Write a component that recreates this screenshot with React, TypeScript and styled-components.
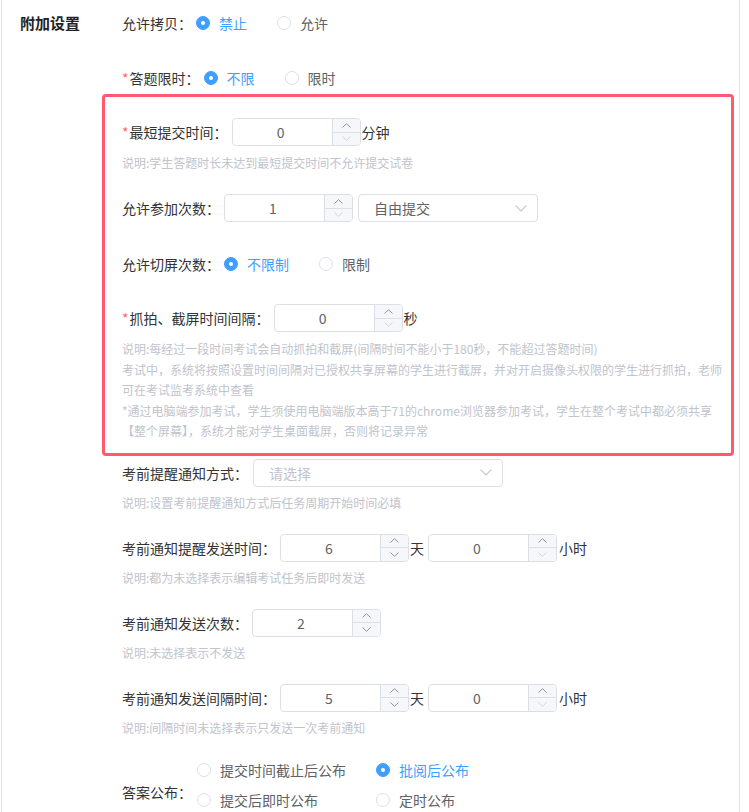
import React from "react";
import styled, { createGlobalStyle } from "styled-components";

const GlobalStyle = createGlobalStyle`
  html, body { margin: 0; padding: 0; background: #fff; }
  body {
    font-family: "Noto Sans CJK SC", "Noto Sans", sans-serif;
    color: #333;
    -webkit-font-smoothing: antialiased;
  }
  * { box-sizing: border-box; }
`;

const Card = styled.div`
  margin-left: 1px;
  width: 739px;
  min-height: 830px;
  border-left: 1px solid #e4e4e4;
  border-right: 1px solid #e4e4e4;
  padding: 9px 0 20px 18px;
  display: flex;
  align-items: flex-start;
`;

const SectionTitle = styled.div`
  width: 102px;
  flex: none;
  font-size: 15px;
  line-height: 28px;
  font-weight: 700;
  color: #222;
`;

const Content = styled.div`
  width: 612px;
  flex: none;
  display: flex;
  flex-direction: column;
`;

const Item = styled.div<{ $mb?: number; $mt?: number }>`
  margin-top: ${(p) => p.$mt ?? 0}px;
  margin-bottom: ${(p) => p.$mb ?? 21}px;
`;

const Row = styled.div`
  display: flex;
  align-items: center;
  height: 28px;
  font-size: 14px;
  line-height: 28px;
`;

const LabelText = styled.span`
  color: #333;
  white-space: nowrap;
  margin-right: 4px;
`;

const Star = styled.span`
  color: #f56c6c;
  margin-right: 1px;
`;

const Unit = styled.span<{ $ml?: number; $mr?: number }>`
  color: #333;
  margin-left: ${(p) => p.$ml ?? 1}px;
  margin-right: ${(p) => p.$mr ?? 0}px;
  white-space: nowrap;
`;

const Desc = styled.div<{ $mt?: number; $lh?: number }>`
  margin-top: ${(p) => p.$mt ?? 6}px;
  font-size: 12px;
  line-height: ${(p) => p.$lh ?? 20}px;
  color: #c0c4cc;
`;

const DescLine = styled.span`
  display: block;
  white-space: nowrap;
`;

const Highlight = styled.div`
  margin-left: -20px;
  width: 632px;
  border: 3px solid #ff5a6e;
  border-radius: 4px;
  padding: 21px 0 11px 17px;
`;

/* ---------- number input ---------- */
const NumberBox = styled.div`
  display: flex;
  width: 129px;
  height: 28px;
  flex: none;
  border: 1px solid #dcdfe6;
  border-radius: 4px;
  overflow: hidden;
  background: #fff;
`;

const NumberValue = styled.div`
  flex: 1;
  display: flex;
  align-items: center;
  justify-content: center;
  font-size: 14px;
  color: #606266;
  padding-right: 3px;
`;

const Steppers = styled.div`
  width: 28px;
  display: flex;
  flex-direction: column;
  border-left: 1px solid #dcdfe6;
  background: #f5f7fa;
`;

const Step = styled.div<{ $disabled?: boolean; $top?: boolean }>`
  flex: 1;
  display: flex;
  align-items: center;
  justify-content: center;
  color: ${(p) => (p.$disabled ? "#d3d6dc" : "#8d9199")};
  border-bottom: ${(p) => (p.$top ? "1px solid #dcdfe6" : "none")};
`;

const Caret = ({ up }: { up?: boolean }) => (
  <svg width="9" height="5" viewBox="0 0 9 5" fill="none">
    <polyline
      points={up ? "0.5,4.5 4.5,0.7 8.5,4.5" : "0.5,0.5 4.5,4.3 8.5,0.5"}
      stroke="currentColor"
      strokeWidth="1"
    />
  </svg>
);

const NumberInput = ({ value, min = 0 }: { value: number; min?: number }) => (
  <NumberBox>
    <NumberValue>{value}</NumberValue>
    <Steppers>
      <Step $top>
        <Caret up />
      </Step>
      <Step $disabled={value <= min}>
        <Caret />
      </Step>
    </Steppers>
  </NumberBox>
);

/* ---------- select ---------- */
const SelectBox = styled.div<{ $w: number; $ml?: number }>`
  display: flex;
  align-items: center;
  justify-content: space-between;
  width: ${(p) => p.$w}px;
  height: 28px;
  margin-left: ${(p) => p.$ml ?? 0}px;
  flex: none;
  border: 1px solid #dcdfe6;
  border-radius: 4px;
  padding: 0 10px 0 15px;
  background: #fff;
`;

const SelectText = styled.span<{ $placeholder?: boolean }>`
  font-size: 14px;
  color: ${(p) => (p.$placeholder ? "#c0c4cc" : "#606266")};
`;

const Chevron = () => (
  <svg width="12" height="7" viewBox="0 0 12 7" fill="none">
    <polyline points="0.7,0.7 6,6 11.3,0.7" stroke="#c0c4cc" strokeWidth="1.1" />
  </svg>
);

const Select = ({ w, ml, text, placeholder }: { w: number; ml?: number; text: string; placeholder?: boolean }) => (
  <SelectBox $w={w} $ml={ml}>
    <SelectText $placeholder={placeholder}>{text}</SelectText>
    <Chevron />
  </SelectBox>
);

/* ---------- radio ---------- */
const RadioGroup = styled.div`
  display: flex;
  align-items: center;
`;

const RadioGrid = styled.div`
  display: grid;
  grid-template-columns: 179px auto;
  row-gap: 8px;
`;

const RadioOption = styled.label<{ $checked: boolean; $mr?: number }>`
  display: inline-flex;
  align-items: center;
  height: 22px;
  margin-right: ${(p) => p.$mr ?? 30}px;
  font-size: 14px;
  color: ${(p) => (p.$checked ? "#409eff" : "#606266")};
  white-space: nowrap;
`;

const RadioCircle = styled.span<{ $checked: boolean }>`
  position: relative;
  width: 14px;
  height: 14px;
  flex: none;
  margin-right: 9px;
  border-radius: 50%;
  border: 1px solid ${(p) => (p.$checked ? "#409eff" : "#dcdfe6")};
  background: ${(p) => (p.$checked ? "#409eff" : "#fff")};
  &::after {
    content: "";
    position: absolute;
    left: 50%;
    top: 50%;
    width: 4px;
    height: 4px;
    border-radius: 50%;
    background: #fff;
    transform: translate(-50%, -50%);
    display: ${(p) => (p.$checked ? "block" : "none")};
  }
`;

const Radio = ({ checked, label, mr }: { checked: boolean; label: string; mr?: number }) => (
  <RadioOption $checked={checked} $mr={mr}>
    <RadioCircle $checked={checked} />
    {label}
  </RadioOption>
);

const AnswerRow = styled.div`
  display: flex;
  align-items: flex-start;
  font-size: 14px;
`;

const AnswerLabel = styled.span`
  color: #333;
  line-height: 28px;
  margin-top: 19px;
  margin-right: 5px;
  white-space: nowrap;
`;

const Label = ({ text, required }: { text: string; required?: boolean }) => (
  <LabelText>
    {required && <Star>*</Star>}
    {text}
  </LabelText>
);

export default function App() {
  return (
    <>
      <GlobalStyle />
      <Card>
        <SectionTitle>附加设置</SectionTitle>
        <Content>
          <Item $mb={27}>
            <Row>
              <Label text="允许拷贝：" />
              <RadioGroup>
                <Radio checked label="禁止" />
                <Radio checked={false} label="允许" />
              </RadioGroup>
            </Row>
          </Item>
          <Item $mb={2}>
            <Row>
              <Label required text="答题限时：" />
              <RadioGroup>
                <Radio checked label="不限" />
                <Radio checked={false} label="限时" />
              </RadioGroup>
            </Row>
          </Item>

          <Highlight>
            <Item $mb={21}>
              <Row>
                <Label required text="最短提交时间：" />
                <NumberInput value={0} />
                <Unit>分钟</Unit>
              </Row>
              <Desc $mt={7}>说明:学生答题时长未达到最短提交时间不允许提交试卷</Desc>
            </Item>
            <Item $mb={28}>
              <Row>
                <Label text="允许参加次数：" />
                <NumberInput value={1} min={1} />
                <Select w={180} ml={5} text="自由提交" />
              </Row>
            </Item>
            <Item $mb={26}>
              <Row>
                <Label text="允许切屏次数：" />
                <RadioGroup>
                  <Radio checked label="不限制" />
                  <Radio checked={false} label="限制" />
                </RadioGroup>
              </Row>
            </Item>
            <Item $mb={0}>
              <Row>
                <Label required text="抓拍、截屏时间间隔：" />
                <NumberInput value={0} />
                <Unit>秒</Unit>
              </Row>
              <Desc $mt={7} $lh={20.5}>
                <DescLine>说明:每经过一段时间考试会自动抓拍和截屏(间隔时间不能小于180秒，不能超过答题时间)</DescLine>
                <DescLine>考试中，系统将按照设置时间间隔对已授权共享屏幕的学生进行截屏，并对开启摄像头权限的学生进行抓拍，老师</DescLine>
                <DescLine>可在考试监考系统中查看</DescLine>
                <DescLine>*通过电脑端参加考试，学生须使用电脑端版本高于71的chrome浏览器参加考试，学生在整个考试中都必须共享</DescLine>
                <DescLine>【整个屏幕】，系统才能对学生桌面截屏，否则将记录异常</DescLine>
              </Desc>
            </Item>
          </Highlight>

          <Item $mt={3}>
            <Row>
              <Label text="考前提醒通知方式：" />
              <Select w={250} ml={1} text="请选择" placeholder />
            </Row>
            <Desc>说明:设置考前提醒通知方式后任务周期开始时间必填</Desc>
          </Item>
          <Item>
            <Row>
              <Label text="考前通知提醒发送时间：" />
              <NumberInput value={6} min={-1} />
              <Unit $mr={4}>天</Unit>
              <NumberInput value={0} />
              <Unit $ml={2}>小时</Unit>
            </Row>
            <Desc>说明:都为未选择表示编辑考试任务后即时发送</Desc>
          </Item>
          <Item>
            <Row>
              <Label text="考前通知发送次数：" />
              <NumberInput value={2} min={-1} />
            </Row>
            <Desc>说明:未选择表示不发送</Desc>
          </Item>
          <Item>
            <Row>
              <Label text="考前通知发送间隔时间：" />
              <NumberInput value={5} min={-1} />
              <Unit $mr={4}>天</Unit>
              <NumberInput value={0} />
              <Unit $ml={2}>小时</Unit>
            </Row>
            <Desc>说明:间隔时间未选择表示只发送一次考前通知</Desc>
          </Item>
          <AnswerRow>
            <AnswerLabel>答案公布：</AnswerLabel>
            <RadioGrid>
              <Radio checked={false} label="提交时间截止后公布" mr={0} />
              <Radio checked label="批阅后公布" mr={0} />
              <Radio checked={false} label="提交后即时公布" mr={0} />
              <Radio checked={false} label="定时公布" mr={0} />
            </RadioGrid>
          </AnswerRow>
        </Content>
      </Card>
    </>
  );
}
